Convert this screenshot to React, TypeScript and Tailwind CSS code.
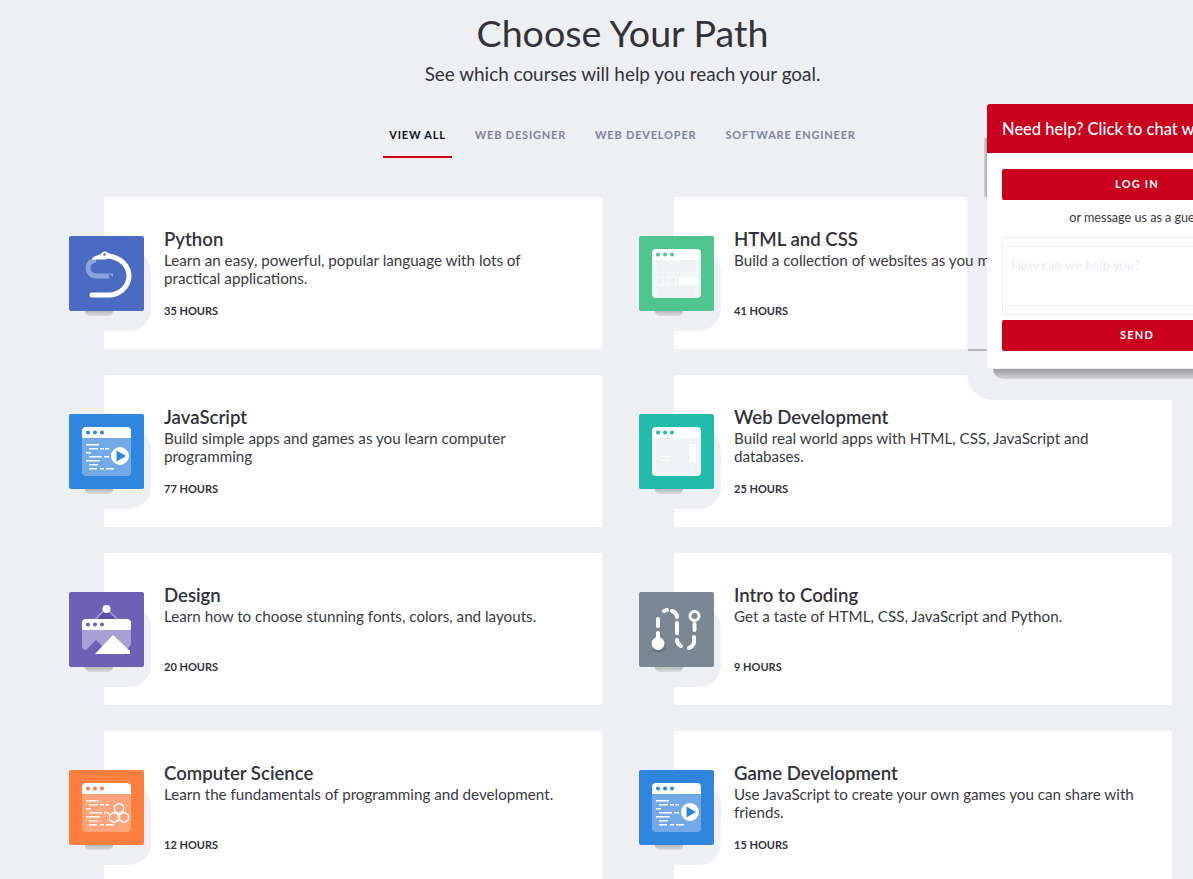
import React from "react";

const windowBody = "M13 24h49v34a4 4 0 0 1-4 4H17a4 4 0 0 1-4-4z";
const titleBar = "M17 13h41a4 4 0 0 1 4 4v7H13v-7a4 4 0 0 1 4-4z";

function Dots({ color }: { color: string }) {
  return (
    <g fill={color}>
      <circle cx="19" cy="18.5" r="2" />
      <circle cx="26" cy="18.5" r="2" />
      <circle cx="33" cy="18.5" r="2" />
    </g>
  );
}

function CodeLines() {
  return (
    <g fill="#fff">
      <rect x="17" y="30" width="13" height="1.5" />
      <rect x="20" y="34" width="9" height="1.5" />
      <rect x="31" y="34" width="4" height="1.5" />
      <rect x="36" y="34" width="4" height="1.5" />
      <rect x="17" y="38" width="5" height="1.5" />
      <rect x="20" y="42" width="13" height="1.5" />
      <rect x="35" y="42" width="5" height="1.5" />
      <rect x="17" y="46" width="14" height="1.5" />
      <rect x="20" y="50" width="9" height="1.5" />
      <rect x="20" y="54" width="8" height="1.5" />
      <rect x="31" y="54" width="4" height="1.5" />
      <rect x="37" y="54" width="8" height="1.5" />
    </g>
  );
}

function CodeWindow({ bg, body }: { bg: string; body: string }) {
  return (
    <>
      <rect width="75" height="75" rx="2" fill={bg} />
      <path d={windowBody} fill={body} />
      <path d={titleBar} fill="#fff" />
      <Dots color={bg} />
      <CodeLines />
    </>
  );
}

function PlayIcon({ bg }: { bg: string }) {
  return (
    <svg viewBox="0 0 75 75" className="h-full w-full">
      <CodeWindow bg={bg} body="#74a9e8" />
      <circle cx="51" cy="42" r="9" fill="#fff" />
      <path d="M47.5 36.5 57 42l-9.5 5.5z" fill={bg} />
    </svg>
  );
}

function PythonIcon() {
  return (
    <svg viewBox="0 0 75 75" className="h-full w-full">
      <rect width="75" height="75" rx="2" fill="#4a6bc1" />
      <path d="M27 24c-5 1-8 4-8 8 0 4 3 8 8 8h17" fill="none" stroke="#8ba3dc" strokeWidth="5" />
      <path d="M40 37.500l6 5.500h-6z" fill="#4a6bc1" />
      <path d="M23 59h17c10 0 20-8 20-19 0-10-8-18-20-20" fill="none" stroke="#fff" strokeWidth="5" strokeLinecap="round" />
      <path d="M23 23c0-2 6-4 9-5 2-3 5-3 7-1 2 1 5 2 5 4l-8 2.500H27c-2 0-4 1-4-.5z" fill="#fff" />
      <circle cx="35.500" cy="18.500" r="1.200" fill="#4a6bc1" />
    </svg>
  );
}

function HtmlIcon() {
  return (
    <svg viewBox="0 0 75 75" className="h-full w-full">
      <rect width="75" height="75" rx="2" fill="#50c48f" />
      <path d={windowBody} fill="#eef3f3" />
      <path d={titleBar} fill="#fff" />
      <Dots color="#50c48f" />
      <g fill="none" stroke="#fff" strokeWidth="0.8">
        <path d="M17 27v10M17 37h41M58 27v10" strokeDasharray="2 1" />
        <rect x="17" y="41" width="7.5" height="8" />
        <rect x="29" y="41" width="8" height="8" />
        <path d="M17 53v7M57 53v7" />
      </g>
      <rect x="40" y="41" width="18" height="8" fill="#fff" />
    </svg>
  );
}

function WebDevIcon() {
  return (
    <svg viewBox="0 0 75 75" className="h-full w-full">
      <rect width="75" height="75" rx="2" fill="#23bcab" />
      <path d={windowBody} fill="#eef3f4" />
      <path d={titleBar} fill="#fff" />
      <Dots color="#23bcab" />
      <rect x="50" y="30" width="7" height="18" fill="#fff" />
      <g fill="#fff">
        <rect x="19" y="38" width="2" height="1" />
        <rect x="21" y="42" width="11" height="1" />
        <rect x="19" y="46" width="13" height="1" />
        <rect x="52" y="52" width="2" height="1" />
      </g>
    </svg>
  );
}

function DesignIcon() {
  return (
    <svg viewBox="0 0 75 75" className="h-full w-full">
      <rect width="75" height="75" rx="2" fill="#6e5fb7" />
      <path d="M37 16 25 29h25z" fill="#5d50a6" stroke="#a89fd6" strokeWidth="1.5" />
      <circle cx="37.5" cy="17" r="4" fill="#fff" />
      <path d="M13 38h49v14a4 4 0 0 1-1 2l-4 4H17a4 4 0 0 1-4-4z" fill="#a9a1d5" />
      <path d="M17 27h41a4 4 0 0 1 4 4v7H13v-7a4 4 0 0 1 4-4z" fill="#fff" />
      <g fill="#6e5fb7">
        <circle cx="19" cy="32.5" r="2" />
        <circle cx="26" cy="32.5" r="2" />
        <circle cx="33" cy="32.5" r="2" />
      </g>
      <path d="M15 60 27 48l8 8-4 4z" fill="#6e5fb7" />
      <path d="M26 62 44 43l17 16v3z" fill="#fff" />
    </svg>
  );
}

function IntroIcon() {
  return (
    <svg viewBox="0 0 75 75" className="h-full w-full">
      <rect width="75" height="75" rx="2" fill="#7c8794" />
      <ellipse cx="20" cy="55" rx="7" ry="6" fill="#6b7582" />
      <g fill="none" stroke="#fff" strokeWidth="4" strokeLinecap="round">
        <path d="M19 34v-7" />
        <path d="M25 19c1-1 2-1 3-1" />
        <path d="M33 19c3 1 5 3 5 6" />
        <path d="M38 31v10" />
        <path d="M38 48c0 3 2 5 4 6" />
        <path d="M50 56c2-1 5-3 5-6v-5" />
        <path d="M55.500 38v-6" />
        <path d="M19 41v6" />
      </g>
      <circle cx="19" cy="51.500" r="6.500" fill="#fff" />
      <circle cx="55.500" cy="24" r="4.500" fill="none" stroke="#fff" strokeWidth="3" />
    </svg>
  );
}

function ScienceIcon() {
  const bg = "#fe8040";
  return (
    <svg viewBox="0 0 75 75" className="h-full w-full">
      <CodeWindow bg={bg} body="#ffa47a" />
      <g fill="none" stroke="#fff" strokeWidth="1.4">
        <path d="M50 33.500l4.500 2.500v5l-4.500 2.500-4.500-2.500v-5z" />
        <path d="M45 42.500l4.500 2.500v5l-4.500 2.500-4.500-2.500v-5z" />
        <path d="M55 42.500l4.500 2.500v5l-4.500 2.500-4.500-2.500v-5z" />
      </g>
    </svg>
  );
}

const courses = [
  { title: "Python", desc: "Learn an easy, powerful, popular language with lots of practical applications.", hours: "35 HOURS", icon: <PythonIcon /> },
  { title: "HTML and CSS", desc: "Build a collection of websites as you master HTML and CSS3.", hours: "41 HOURS", icon: <HtmlIcon /> },
  { title: "JavaScript", desc: "Build simple apps and games as you learn computer programming", hours: "77 HOURS", icon: <PlayIcon bg="#3086dc" /> },
  { title: "Web Development", desc: "Build real world apps with HTML, CSS, JavaScript and databases.", hours: "25 HOURS", icon: <WebDevIcon /> },
  { title: "Design", desc: "Learn how to choose stunning fonts, colors, and layouts.", hours: "20 HOURS", icon: <DesignIcon /> },
  { title: "Intro to Coding", desc: "Get a taste of HTML, CSS, JavaScript and Python.", hours: "9 HOURS", icon: <IntroIcon /> },
  { title: "Computer Science", desc: "Learn the fundamentals of programming and development.", hours: "12 HOURS", icon: <ScienceIcon /> },
  { title: "Game Development", desc: "Use JavaScript to create your own games you can share with friends.", hours: "15 HOURS", icon: <PlayIcon bg="#3086dc" /> },
];

const tabs = ["WEB DESIGNER", "WEB DEVELOPER", "SOFTWARE ENGINEER"];

function CourseCard({ title, desc, hours, icon }: { title: string; desc: string; hours: string; icon: React.ReactNode }) {
  return (
    <div className="relative h-[152px] rounded-[2px] bg-white pl-[60px] pr-[28px] pt-[31px]">
      {/* long shadow behind the icon */}
      <div className="absolute left-[-35px] top-[53px] h-[81px] w-[82px] rounded-r-[22px] bg-[#eeeff3]" />
      <div className="absolute left-[-19px] top-[114px] h-[5px] w-[28px] rounded-b-[8px] bg-gradient-to-b from-[#b8b8ba] to-[#dcdcdf]" />
      <div className="absolute left-[-35px] top-[39px] h-[75px] w-[75px]">{icon}</div>
      {/* text sits above the chat widget's shadow */}
      <div className="relative z-[2]">
        <h3 className="text-[18.6px] font-semibold leading-[23px] text-[#33323a]">{title}</h3>
        <p className="h-[36px] text-[15.2px] leading-[18px] text-[#3a3942]">{desc}</p>
        <p className="mt-[17px] text-[11px] font-bold leading-[14px] text-[#33323a]">{hours}</p>
      </div>
    </div>
  );
}

function ChatWidget() {
  return (
    <>
      {/* shadow layers of the widget */}
      <div className="absolute left-[967px] top-[197px] z-[1] h-[203px] w-[205px] rounded-bl-[26px] bg-[#eeeff3]" />
      <div className="absolute left-[984px] top-[138px] z-[3] h-[59px] w-[3px] bg-gradient-to-r from-[#d5d5d8] to-[#a9a9ab]" />
      <div className="absolute left-[968px] top-[349px] z-[3] h-[2px] w-[19px] bg-[#b4b4b6]" />
      <div className="absolute left-[993px] top-[369px] z-[3] h-[10px] w-[200px] rounded-bl-[10px] bg-gradient-to-b from-[#9c9c9e] to-[#d5d5d8]" />
      <div className="absolute left-[987px] top-[104px] z-[3] w-[300px] overflow-hidden rounded-t-[3px] bg-white">
        <div className="flex h-[49px] items-center bg-[#c8001e] pl-[15px] pt-[2px] text-[16.5px] font-medium text-white">Need help? Click to chat with us!</div>
        <div className="flex h-[215px] flex-col px-[15px] pt-[16px]">
          <div className="flex h-[31px] items-center justify-center rounded-[2px] bg-[#c8001e] text-[11px] font-bold tracking-[1.2px] text-white">LOG IN</div>
          <p className="mt-[9px] text-center text-[12.6px] leading-[18px] text-[#3a3942]">or message us as a guest</p>
          <div className="mt-[10px] flex h-[78px] flex-col justify-center rounded-[3px] border border-[#eeeff3]">
            <div className="h-[60px] rounded-[3px] border-y border-[#eeeff3] pl-[8px] pt-[9px] text-[13px] font-bold leading-[18px] text-[#eceef2]">How can we help you?</div>
          </div>
          <div className="mt-[5px] flex h-[31px] items-center justify-center rounded-[2px] bg-[#c8001e] text-[11px] font-bold tracking-[1.2px] text-white">SEND</div>
        </div>
      </div>
    </>
  );
}

export default function App() {
  return (
    <div className="relative h-[879px] w-[1193px] overflow-hidden bg-[#eeeff3] font-['Lato',sans-serif]">
      <div className="flex flex-col items-center pl-[52px] pt-[10px]">
        <h1 className="text-[37.6px] font-normal leading-[46px] text-[#33323a]">Choose Your Path</h1>
        <p className="mt-[6px] text-[18.9px] leading-[24px] text-[#33323a]">See which courses will help you reach your goal.</p>
        <nav className="mt-[35px] flex gap-[17px] text-[11px] font-bold leading-[14px] tracking-[0.8px] text-[#80839f]">
          <span className="border-b-2 border-[#c8001e] px-[6px] pb-[14px] pt-[7px] text-[#10101a]">VIEW ALL</span>
          {tabs.map((tab) => (
            <span key={tab} className="px-[6px] pb-[14px] pt-[7px]">{tab}</span>
          ))}
        </nav>
      </div>
      <div className="ml-[104px] mt-[39px] grid w-[1068px] grid-cols-[498px_498px] gap-x-[72px] gap-y-[26px]">
        {courses.map((course) => (
          <CourseCard key={course.title} {...course} />
        ))}
      </div>
      <ChatWidget />
    </div>
  );
}
